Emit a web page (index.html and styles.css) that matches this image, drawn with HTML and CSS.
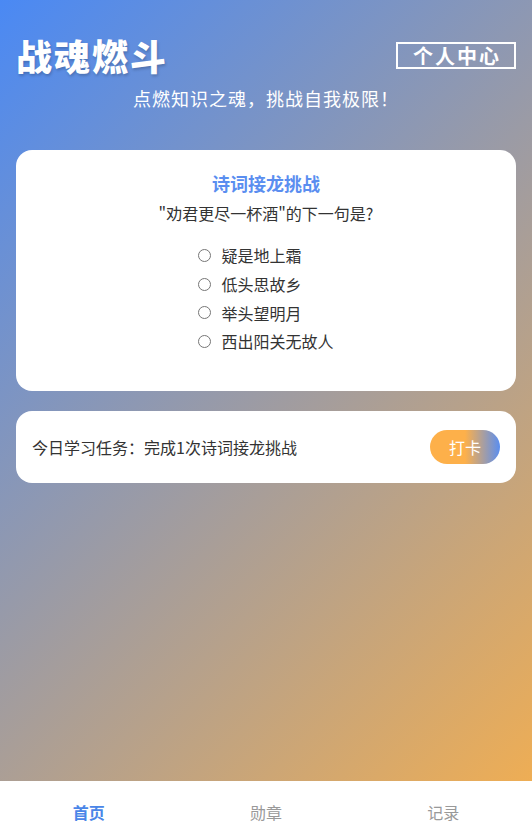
FILE: index.html
```html
<!DOCTYPE html>
<html lang="zh-CN">

<head>
    <meta charset="UTF-8">
    <meta name="viewport" content="width=device-width, initial-scale=1.0">
    <title>战魂燃斗</title>
    <link rel="stylesheet" href="styles.css">
</head>

<body>
    <div class="page">
        <header class="header">
            <div class="header-top">
                <h1 class="logo">战魂燃斗</h1>
                <a class="profile-btn" href="#">个人中心</a>
            </div>
            <p class="slogan">点燃知识之魂，挑战自我极限！</p>
        </header>

        <section class="card quiz">
            <h2 class="quiz-title">诗词接龙挑战</h2>
            <p class="quiz-question">"劝君更尽一杯酒"的下一句是?</p>
            <div class="options">
                <label class="option"><input type="radio" name="answer"><span>疑是地上霜</span></label>
                <label class="option"><input type="radio" name="answer"><span>低头思故乡</span></label>
                <label class="option"><input type="radio" name="answer"><span>举头望明月</span></label>
                <label class="option"><input type="radio" name="answer"><span>西出阳关无故人</span></label>
            </div>
        </section>

        <section class="card task">
            <span class="task-text">今日学习任务：完成1次诗词接龙挑战</span>
            <button class="checkin-btn" type="button">打卡</button>
        </section>
    </div>

    <nav class="tabbar">
        <a class="tab active" href="#">首页</a>
        <a class="tab" href="#">勋章</a>
        <a class="tab" href="#">记录</a>
    </nav>
</body>

</html>
```

FILE: styles.css
```css
* {
    box-sizing: border-box;
}

body {
    margin: 0;
    min-height: 100vh;
    font-family: "Noto Sans CJK SC", "Noto Sans", sans-serif;
    background: linear-gradient(135deg, #4a89f4 0%, #f5af4e 100%);
    background-attachment: fixed;
}

.page {
    padding: 34px 16px 80px 16px;
}

.header-top {
    display: flex;
    justify-content: space-between;
    align-items: center;
}

.logo {
    margin: 0;
    font-size: 36px;
    line-height: 43px;
    font-weight: 900;
    letter-spacing: 2px;
    color: #fff;
    text-shadow: 1px 2px 3px rgba(0, 0, 0, 0.2);
}

.profile-btn {
    display: block;
    border: 2px solid #fff;
    padding: 0 13px 0 15px;
    line-height: 23px;
    font-size: 20px;
    font-weight: 700;
    letter-spacing: 2px;
    color: #fff;
    text-decoration: none;
}

.slogan {
    margin: 8px 0 0 0;
    text-align: center;
    font-size: 18px;
    line-height: 26px;
    letter-spacing: 1px;
    color: #fff;
}

.card {
    background: #fff;
    border-radius: 16px;
}

.quiz {
    margin-top: 39px;
    padding: 20px 20px 35px 20px;
    text-align: center;
}

.quiz-title {
    margin: 0;
    font-size: 18px;
    line-height: 26px;
    font-weight: 700;
    color: #5a8ef0;
}

.quiz-question {
    margin: 6px 0 0 0;
    font-size: 16px;
    line-height: 22px;
    color: #333;
}

.options {
    display: inline-flex;
    flex-direction: column;
    align-items: flex-start;
    margin-top: 17px;
}

.option {
    display: flex;
    align-items: center;
    height: 28.7px;
    font-size: 16px;
    color: #333;
}

.option input {
    margin: 0 10px 0 0;
    width: 13px;
    height: 13px;
}

.task {
    margin-top: 20px;
    height: 72px;
    padding: 0 16px;
    display: flex;
    justify-content: space-between;
    align-items: center;
}

.task-text {
    font-size: 16px;
    color: #333;
}

.checkin-btn {
    width: 70px;
    height: 34px;
    border: none;
    border-radius: 17px;
    background: linear-gradient(90deg, #fdb04a 50%, #5a8ef0 100%);
    font-family: inherit;
    font-size: 16px;
    color: #fff;
}

.tabbar {
    position: fixed;
    left: 0;
    right: 0;
    bottom: 0;
    height: 56px;
    display: flex;
    background: #fff;
}

.tab {
    flex: 1;
    padding-top: 19px;
    line-height: 24px;
    text-align: center;
    font-size: 16px;
    color: #999;
    text-decoration: none;
}

.tab.active {
    color: #4a86e8;
    font-weight: 700;
}
```
